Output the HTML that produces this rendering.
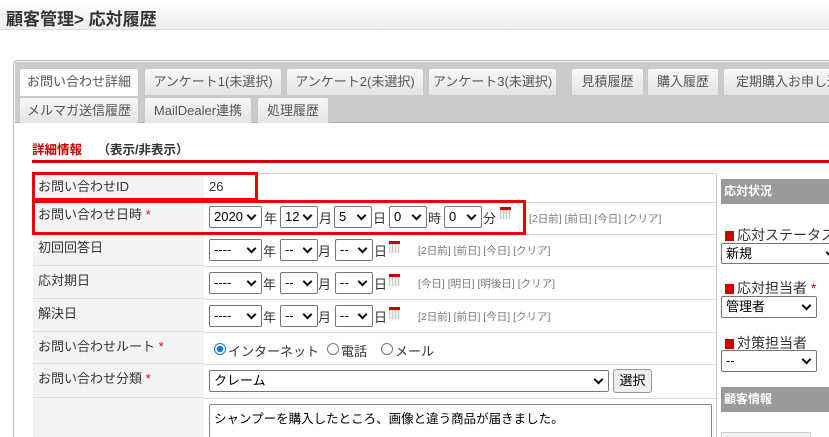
<!DOCTYPE html>
<html style="width:829px;height:437px;overflow:hidden"><head><meta charset="utf-8"><style>
*{box-sizing:border-box;margin:0;padding:0}
body{width:829px;height:437px;overflow:hidden;background:#fff;font-family:"Liberation Sans","Noto Sans CJK JP",sans-serif;font-size:13px;color:#333;position:relative}
.a{position:absolute;white-space:nowrap}
.hdr{left:0;top:0;width:829px;height:30px;background:linear-gradient(#fff,#eee);border-bottom:1px solid #ddd}
.tab{position:absolute;height:27px;background:linear-gradient(#f8f8f8,#e4e4e4);border:1px solid #c8c8c8;border-bottom:none;border-radius:3px 3px 0 0;font-size:13px;color:#555;text-align:center;line-height:26px;white-space:nowrap;overflow:hidden}
.sel{position:absolute;height:22px;border:1px solid #777;border-radius:2px;background:#fff;font-size:13px;line-height:20px;padding-left:4px;color:#000}
.sel:after{content:"";position:absolute;right:6px;top:5px;width:5px;height:5px;border-right:2px solid #111;border-bottom:2px solid #111;transform:rotate(45deg)}
.lbl{position:absolute;left:33px;width:171px;background:#f2f4f3;border-bottom:1px solid #ddd;padding-left:5px;color:#333}
.ln{position:absolute;left:33px;width:683px;height:1px;background:#d8d8d8}
.cal{position:absolute;width:11px;height:12px;background:repeating-linear-gradient(90deg,#ccc 0 1px,#eee 1px 3px);border-top:3px solid #c00}
.lk{position:absolute;font-size:10.5px;color:#777}
.rd{position:absolute;width:12px;height:12px;border:1px solid #777;border-radius:50%;background:#fff}
.red{color:#e00}
.bar{position:absolute;left:721px;width:108px;height:25px;background:#9a9a9a;color:#fff;font-weight:bold;font-size:12px;line-height:25px;padding-left:3px}
.sq{display:inline-block;width:9px;height:10px;background:#c00;margin-right:3px;vertical-align:-1px}
</style></head><body>
<div class="a hdr"></div>
<div class="a" style="left:6px;top:5px;font-size:17px;font-weight:bold;color:#333">顧客管理&gt; 応対履歴</div>

<div class="a" style="left:13px;top:60px;width:830px;height:377px;border:1px solid #bbb;border-bottom:none;border-radius:4px 4px 0 0"></div>
<div class="a" style="left:15px;top:62px;width:814px;height:61px;background:#cbcbcb;border-bottom:1px solid #aaa"></div>
<div class="tab" style="left:19px;top:68px;width:120px;background:#fff;height:28px">お問い合わせ詳細</div>
<div class="tab" style="left:144px;top:68px;width:138px">アンケート1(未選択)</div>
<div class="tab" style="left:286px;top:68px;width:138px">アンケート2(未選択)</div>
<div class="tab" style="left:428px;top:68px;width:129px">アンケート3(未選択)</div>
<div class="tab" style="left:571px;top:68px;width:73px">見積履歴</div>
<div class="tab" style="left:647px;top:68px;width:72px">購入履歴</div>
<div class="tab" style="left:723px;top:68px;width:120px;text-align:left;padding-left:12px">定期購入お申し込み</div>
<div class="tab" style="left:19px;top:97px;width:120px;height:26px">メルマガ送信履歴</div>
<div class="tab" style="left:144px;top:97px;width:108px;height:26px">MailDealer連携</div>
<div class="tab" style="left:257px;top:97px;width:72px;height:26px">処理履歴</div>

<div class="a" style="left:32px;top:139px;font-size:12.5px;font-weight:bold;color:#c00">詳細情報 <span style="margin-left:12px;color:#333">（表示/非表示）</span></div>
<div class="a" style="left:32px;top:160px;width:797px;height:3px;background:#c00"></div>

<div class="a" style="left:716px;top:173px;width:1px;height:270px;background:#ccc"></div>
<div class="ln" style="top:173px"></div>
<div class="lbl" style="top:173px;height:29px;line-height:27px">お問い合わせID</div>
<div class="a" style="left:209px;top:179px">26</div>
<div class="ln" style="top:202px"></div>
<div class="lbl" style="top:202px;height:32px;line-height:26px">お問い合わせ日時 <span class="red">*</span></div>
<div class="sel" style="left:209px;top:206px;width:53px">2020</div><div class="a" style="left:264px;top:208px">年</div>
<div class="sel" style="left:280px;top:206px;width:38px">12</div><div class="a" style="left:319px;top:208px">月</div>
<div class="sel" style="left:334px;top:206px;width:38px">5</div><div class="a" style="left:373px;top:208px">日</div>
<div class="sel" style="left:389px;top:206px;width:38px">0</div><div class="a" style="left:428px;top:208px">時</div>
<div class="sel" style="left:444px;top:206px;width:38px">0</div><div class="a" style="left:483px;top:208px">分</div>
<div class="cal" style="left:500px;top:207px"></div>
<div class="lk" style="left:529px;top:211px">[2日前] [前日] [今日] [クリア]</div>

<div class="ln" style="top:234px"></div>
<div class="lbl" style="top:234px;height:32px;line-height:28px">初回回答日</div>
<div class="ln" style="top:266px"></div>
<div class="lbl" style="top:266px;height:33px;line-height:30px">応対期日</div>
<div class="ln" style="top:299px"></div>
<div class="lbl" style="top:299px;height:33px;line-height:30px">解決日</div>

<div class="sel" style="left:209px;top:239px;width:53px">----</div><div class="a" style="left:263px;top:241px">年</div>
<div class="sel" style="left:280px;top:239px;width:38px">--</div><div class="a" style="left:318px;top:241px">月</div>
<div class="sel" style="left:335px;top:239px;width:38px">--</div><div class="a" style="left:374px;top:241px">日</div>
<div class="cal" style="left:389px;top:241px"></div>
<div class="lk" style="left:418px;top:243px">[2日前] [前日] [今日] [クリア]</div>

<div class="sel" style="left:209px;top:272px;width:53px">----</div><div class="a" style="left:263px;top:274px">年</div>
<div class="sel" style="left:280px;top:272px;width:38px">--</div><div class="a" style="left:318px;top:274px">月</div>
<div class="sel" style="left:335px;top:272px;width:38px">--</div><div class="a" style="left:374px;top:274px">日</div>
<div class="cal" style="left:389px;top:274px"></div>
<div class="lk" style="left:418px;top:276px">[今日] [明日] [明後日] [クリア]</div>

<div class="sel" style="left:209px;top:305px;width:53px">----</div><div class="a" style="left:263px;top:307px">年</div>
<div class="sel" style="left:280px;top:305px;width:38px">--</div><div class="a" style="left:318px;top:307px">月</div>
<div class="sel" style="left:335px;top:305px;width:38px">--</div><div class="a" style="left:374px;top:307px">日</div>
<div class="cal" style="left:389px;top:307px"></div>
<div class="lk" style="left:418px;top:309px">[2日前] [前日] [今日] [クリア]</div>

<div class="ln" style="top:332px"></div>
<div class="lbl" style="top:332px;height:32px;line-height:30px">お問い合わせルート <span class="red">*</span></div>
<div class="rd" style="left:214px;top:343px;border-color:#1a73e8;background:radial-gradient(#1a73e8 0 3px,#fff 3.5px)"></div>
<div class="a" style="left:228px;top:341px">インターネット</div>
<div class="rd" style="left:327px;top:343px"></div><div class="a" style="left:341px;top:341px">電話</div>
<div class="rd" style="left:381px;top:343px"></div><div class="a" style="left:395px;top:341px">メール</div>

<div class="ln" style="top:364px"></div>
<div class="lbl" style="top:364px;height:34px;line-height:30px">お問い合わせ分類 <span class="red">*</span></div>
<div class="sel" style="left:209px;top:370px;width:400px">クレーム</div>
<div class="a" style="left:613px;top:369px;width:39px;height:24px;border:1px solid #999;border-radius:3px;background:#efefef;text-align:center;line-height:22px;color:#000">選択</div>
<div class="ln" style="top:398px"></div>
<div class="lbl" style="top:398px;height:40px;border:none"></div>
<div class="a" style="left:209px;top:404px;width:503px;height:40px;border:1px solid #888;border-radius:2px;padding:3px 4px;font-size:12.5px;color:#000">シャンプーを購入したところ、画像と違う商品が届きました。</div>

<div class="bar" style="top:179px">応対状況</div>
<div class="a" style="left:725px;top:225px;font-size:14px"><span class="sq"></span>応対ステータス <span class="red">*</span></div>
<div class="sel" style="left:721px;top:243px;width:120px;height:21px">新規</div>
<div class="a" style="left:725px;top:278px;font-size:14px"><span class="sq"></span>応対担当者 <span class="red">*</span></div>
<div class="sel" style="left:721px;top:296px;width:96px">管理者</div>
<div class="a" style="left:725px;top:333px;font-size:14px"><span class="sq"></span>対策担当者</div>
<div class="sel" style="left:721px;top:350px;width:96px">--</div>
<div class="bar" style="top:387px">顧客情報</div>
<div class="a" style="left:721px;top:432px;width:90px;height:10px;border:1px solid #ccc;background:#f2f2f2"></div>

<div class="a" style="left:32px;top:172px;width:226px;height:29px;border:3px solid #e00"></div>
<div class="a" style="left:32px;top:200px;width:494px;height:35px;border:3px solid #e00"></div>
</body></html>
